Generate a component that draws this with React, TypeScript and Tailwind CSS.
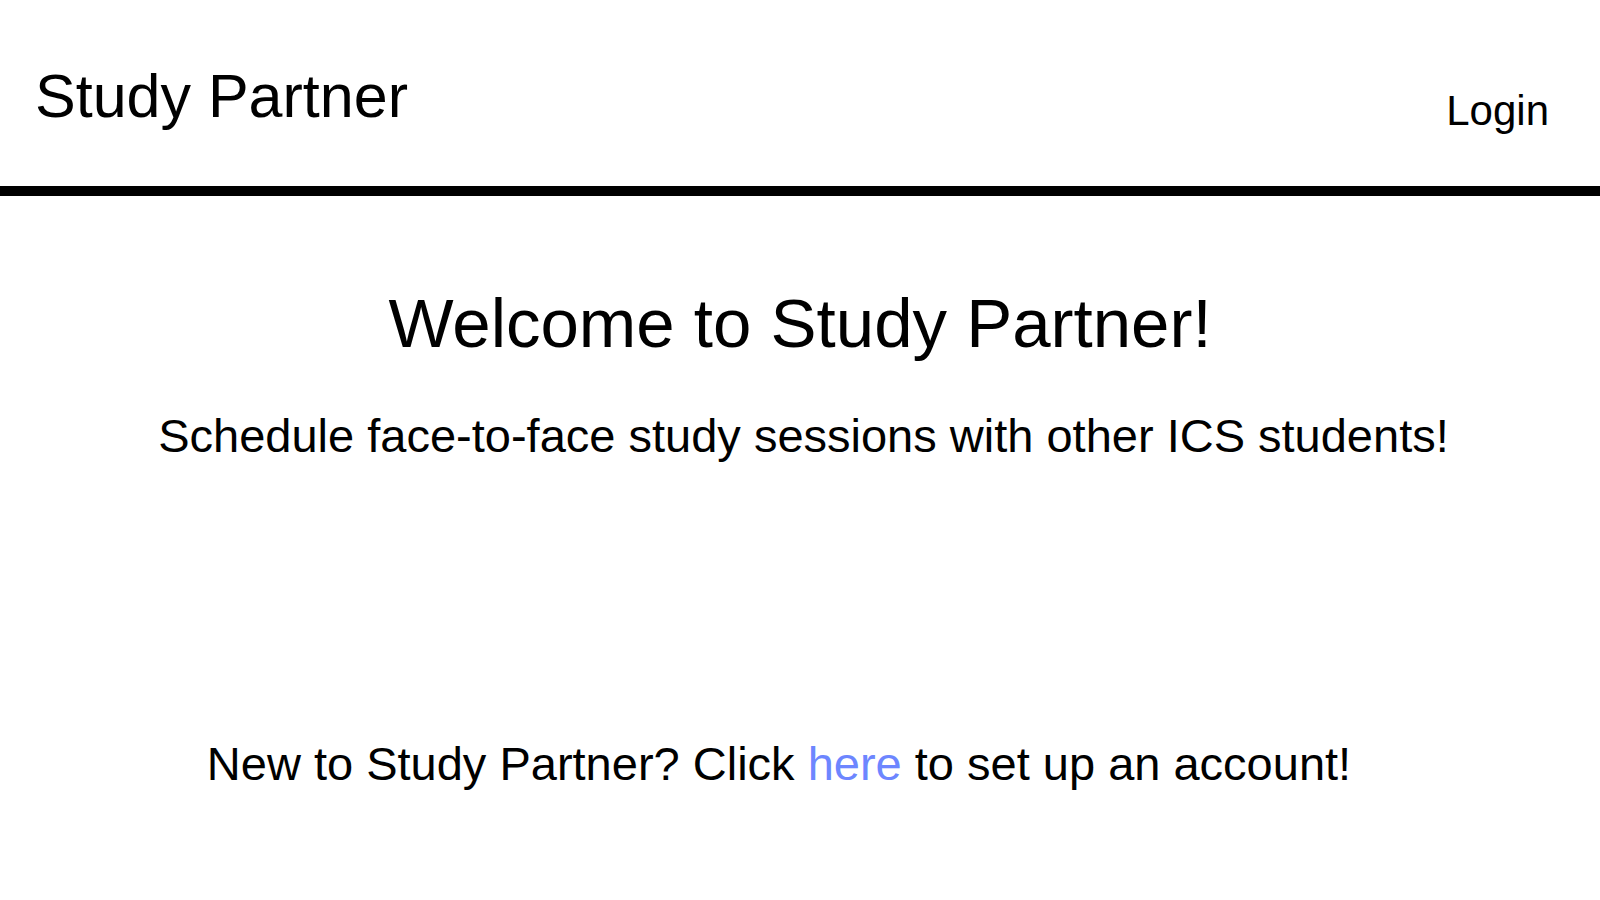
import React from 'react';

const App = () => {
  return (
    <div className="min-h-screen bg-white text-black font-['Liberation_Sans',Arial,sans-serif]">
      {/* Top bar */}
      <header className="h-[196px] border-b-[10px] border-black flex justify-between items-start pl-[35px] pr-[51px]">
        <h1 className="mt-[66px] text-[61px] leading-none font-normal">Study Partner</h1>
        <a href="#" className="mt-[90px] text-[42px] leading-none">
          Login
        </a>
      </header>

      <main className="flex flex-col items-center">
        <h2 className="mt-[93px] text-[69px] leading-none font-normal">Welcome to Study Partner!</h2>
        <p className="mt-[54px] ml-[7px] text-[47px] leading-none">
          Schedule face-to-face study sessions with other ICS students!
        </p>
        <p className="mt-[281px] mr-[42px] text-[47px] leading-none">
          New to Study Partner? Click{' '}
          <a href="#" className="text-[#6d86ff]">
            here
          </a>{' '}
          to set up an account!
        </p>
      </main>
    </div>
  );
};

export default App;
